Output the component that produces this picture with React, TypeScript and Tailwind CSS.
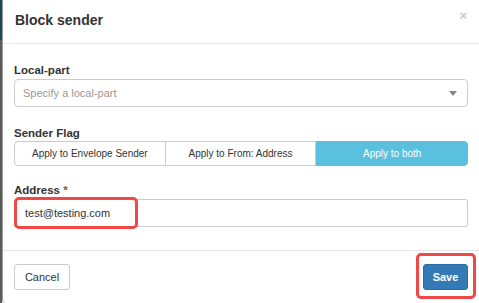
import React from 'react';

const flags = ['Apply to Envelope Sender', 'Apply to From: Address', 'Apply to both'];

export default function App() {
  return (
    <div className="flex h-[303px] w-[479px] overflow-hidden bg-white font-['Liberation_Sans',Arial,sans-serif] text-[#333]">
      {/* backdrop edge */}
      <div className="flex w-[2px] shrink-0 flex-col">
        <div className="h-[40px] bg-[#1d4a5a]" />
        <div className="flex-1 bg-[#5a5a5a]" />
      </div>

      <div className="flex flex-1 flex-col rounded-bl-[4px] border-l border-[#999] bg-white">
        <div className="flex h-[44px] items-start justify-between border-b border-[#e5e5e5] pl-[12px] pr-[12px] pt-[10px]">
          <h1 className="text-[14px] font-bold leading-[20px]">Block sender</h1>
          <span className="text-[13px] font-bold leading-[12px] text-[#c8c8c8]">×</span>
        </div>

        <div className="flex h-[207px] flex-col border-b border-[#e5e5e5] px-[11px] pt-[18px]">
          <label className="text-[11.5px] font-bold leading-[16px]">Local-part</label>
          <div className="mt-[1px] flex h-[28px] items-center justify-between rounded-[4px] border border-[#ccc] pl-[8px] pr-[10px]">
            <span className="text-[11px] text-[#999]">Specify a local-part</span>
            <span className="h-0 w-0 border-x-[4px] border-t-[5px] border-x-transparent border-t-[#888]" />
          </div>

          <label className="mt-[18px] text-[11.5px] font-bold leading-[16px]">Sender Flag</label>
          <div className="flex h-[25px]">
            {flags.map((f, i) => (
              <div
                key={f}
                className={
                  i === 2
                    ? 'flex flex-1 items-center justify-center rounded-r-[4px] border border-[#5bc0de] bg-[#5bc0de] text-[10px] text-white'
                    : i === 0
                    ? 'flex flex-1 items-center justify-center rounded-l-[4px] border border-[#ccc] text-[10px]'
                    : 'flex flex-1 items-center justify-center border border-l-0 border-[#ccc] text-[10px]'
                }
              >
                {f}
              </div>
            ))}
          </div>

          <label className="mt-[16px] text-[11.5px] font-bold leading-[16px]">
            Address <span className="text-[#a94442]">*</span>
          </label>
          <div className="relative mt-[1px] flex h-[28px] items-center rounded-[2px] border border-[#ccc] pl-[10px]">
            <span className="text-[11px]">test@testing.com</span>
            <div className="absolute left-[-1px] top-[-3px] h-[32px] w-[124px] rounded-[5px] border-[3px] border-[#f04747]" />
          </div>
        </div>

        <div className="flex items-start justify-between px-[11px] pt-[13px]">
          <button className="h-[26px] w-[56px] rounded-[3px] border border-[#ccc] text-[11px]">Cancel</button>
          <div className="relative">
            <button className="h-[26px] w-[45px] rounded-[3px] border border-[#2e6da4] bg-[#337ab7] text-[11px] font-bold text-white">
              Save
            </button>
            <div className="absolute left-[-7px] top-[-11px] h-[46px] w-[60px] rounded-[5px] border-[3px] border-[#f04747]" />
          </div>
        </div>
      </div>
    </div>
  );
}
